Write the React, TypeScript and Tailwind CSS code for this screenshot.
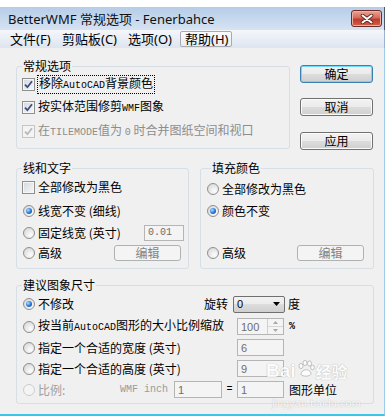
import React from "react";

type Opt = { checked?: boolean; disabled?: boolean };

function Check({ checked, disabled }: Opt) {
  return (
    <span
      className={
        disabled
          ? "flex h-[13px] w-[13px] shrink-0 items-center justify-center border border-[#c5c5c5] bg-[#f4f4f4]"
          : "flex h-[13px] w-[13px] shrink-0 items-center justify-center border border-[#8e8f8f] bg-[linear-gradient(135deg,#d3d7dd,#f8f8f8)] shadow-[inset_0_0_0_1px_#f6f6f6]"
      }
    >
      {checked && (
        <svg width="9" height="9" viewBox="0 0 9 9">
          <path
            d="M1 4.6 L3.4 7.2 L8 1.2"
            fill="none"
            stroke={disabled ? "#b8b8b8" : "#3d4f82"}
            strokeWidth="1.8"
          />
        </svg>
      )}
    </span>
  );
}

function Radio({ checked, disabled }: Opt) {
  return (
    <span
      className={
        disabled
          ? "flex h-[12px] w-[12px] shrink-0 items-center justify-center rounded-full border border-[#cdcdcd] bg-[#f4f4f4]"
          : "flex h-[12px] w-[12px] shrink-0 items-center justify-center rounded-full border border-[#8e8f8f] bg-[radial-gradient(circle_at_65%_70%,#fdfdfd,#d2d2d2)]"
      }
    >
      {checked && (
        <span className="h-[6px] w-[6px] rounded-full bg-[radial-gradient(circle_at_35%_35%,#a4e4ff,#2b70d4_55%,#0f3d92)]" />
      )}
    </span>
  );
}

function Btn({ children, primary }: { children: React.ReactNode; primary?: boolean }) {
  return (
    <div
      className={
        primary
          ? "flex h-[18px] w-[73px] items-center justify-center rounded-[3px] border border-[#3c7fb1] bg-[linear-gradient(#f2f2f2_0%,#ebebeb_49%,#dddddd_50%,#cfcfcf_100%)] shadow-[inset_0_0_0_1px_#6fd8fb] text-[12px] leading-[14px]"
          : "flex h-[18px] w-[73px] items-center justify-center rounded-[3px] border border-[#707070] bg-[linear-gradient(#f2f2f2_0%,#ebebeb_49%,#dddddd_50%,#cfcfcf_100%)] shadow-[inset_0_0_0_1px_#fbfbfb] text-[12px] leading-[14px]"
      }
    >
      {children}
    </div>
  );
}

function EditBtn({ className }: { className: string }) {
  return (
    <div
      className={
        "flex h-[16px] w-[67px] items-center justify-center rounded-[3px] border border-[#adb2b5] bg-[#f4f4f4] text-[12px] leading-[14px] text-[#838383] " +
        className
      }
    >
      编辑
    </div>
  );
}

function Field({ value, className }: { value: string; className: string }) {
  return (
    <div
      className={
        "flex h-[17px] items-center border border-[#b5b5b5] bg-[#f4f4f4] pl-[3px] font-['Liberation_Sans',sans-serif] text-[11px] text-[#6d6d6d] " +
        className
      }
    >
      {value}
    </div>
  );
}

function Mono({ children }: { children: React.ReactNode }) {
  return <span className="font-['Liberation_Mono',monospace] text-[10px]">{children}</span>;
}

function Group({
  title,
  className,
  legend,
  children,
}: {
  title: string;
  className: string;
  legend: string;
  children: React.ReactNode;
}) {
  return (
    <fieldset className={"rounded-[3px] border border-[#d5dfe5] " + className}>
      <legend className={"px-[1px] text-[12px] leading-[14px] " + legend}>{title}</legend>
      {children}
    </fieldset>
  );
}

export default function App() {
  return (
    <div className="relative h-[420px] w-[390px] overflow-hidden bg-white font-['Noto_Sans_CJK_SC',sans-serif] text-black">
      <div className="mt-[7px] w-[385px]">
        {/* Title bar */}
        <div className="flex h-[23px] items-center justify-between border-r border-[#4f5866] bg-[linear-gradient(#b5cde8,#d6e3f2)] pl-[8px] pr-[2px]">
          <span className="font-['Noto_Sans','Noto_Sans_CJK_SC',sans-serif] text-[13px] leading-[16px] text-[#111]">
            BetterWMF 常规选项 - Fenerbahce
          </span>
          <div className="flex h-[17px] w-[31px] items-center justify-center rounded-[3px] border border-[#6d2b28] bg-[linear-gradient(#e8a493_0%,#d56c5a_45%,#c0392b_55%,#d0634c_100%)] shadow-[inset_0_0_0_1px_#eeb0a3]">
            <svg width="14" height="10" viewBox="0 0 14 10">
              <path d="M2.5 1.5 L11.5 8.5 M11.5 1.5 L2.5 8.5" stroke="#5a2620" strokeWidth="3.6" strokeLinecap="round" />
              <path d="M2.5 1.5 L11.5 8.5 M11.5 1.5 L2.5 8.5" stroke="#ffffff" strokeWidth="2" strokeLinecap="round" />
            </svg>
          </div>
        </div>

        {/* Menu bar */}
        <div className="flex h-[18px] items-center border-r border-[#9ab4d0] bg-[linear-gradient(#f4f6fa,#dee5f0)] pl-[10px] font-['Noto_Sans','Noto_Sans_CJK_SC',sans-serif] text-[13px] leading-[16px]">
          <span className="w-[52px]">文件(F)</span>
          <span className="w-[66px]">剪贴板(C)</span>
          <span className="w-[52px]">选项(O)</span>
          <span className="flex h-[16px] w-[52px] items-center rounded-[2px] border border-[#a7abb0] bg-[linear-gradient(#fbfbfc,#e9ecf1)] pl-[4px]">
            帮助(H)
          </span>
        </div>

        {/* Body */}
        <div className="h-[368px] border-r border-b-2 border-r-[#9fcbea] border-b-[#3cc7ea] bg-[#f0f0f0] pl-[16px] pt-[11px]">
          {/* Row 1 */}
          <div className="flex gap-[10px]">
            <Group title="常规选项" legend="ml-[5px]" className="h-[90px] w-[274px]">
              <div className="flex h-[22px] items-center gap-[2px] pl-[5px] text-[12px] leading-[12px]">
                <Check checked />
                <span className="border border-dotted border-black px-[1px] py-[1px]">
                  移除<Mono>AutoCAD</Mono>背景颜色
                </span>
              </div>
              <div className="flex h-[24px] items-center gap-[3px] pl-[5px] text-[12px] leading-[14px]">
                <Check checked />
                <span>
                  按实体范围修剪<Mono>WMF</Mono>图象
                </span>
              </div>
              <div className="flex h-[24px] items-center gap-[3px] pl-[5px] text-[12px] leading-[14px] text-[#8d8d8d]">
                <Check checked disabled />
                <span>
                  在<Mono>TILEMODE</Mono>值为 <Mono>0</Mono> 时合并图纸空间和视口
                </span>
              </div>
            </Group>
            <div className="flex w-[73px] flex-col">
              <div className="mt-[6px]">
                <Btn primary>确定</Btn>
              </div>
              <div className="mt-[15px]">
                <Btn>取消</Btn>
              </div>
              <div className="mt-[16px]">
                <Btn>应用</Btn>
              </div>
            </div>
          </div>

          {/* Row 2 */}
          <div className="mt-[11px] flex gap-[11px]">
            <Group title="线和文字" legend="ml-[5px]" className="h-[108px] w-[173px]">
              <div className="flex h-[24px] items-center gap-[3px] pl-[5px] text-[12px] leading-[14px]">
                <Check />
                <span>全部修改为黑色</span>
              </div>
              <div className="flex h-[24px] items-center gap-[3px] pl-[6px] text-[12px] leading-[14px]">
                <Radio checked />
                <span>线宽不变 (细线)</span>
              </div>
              <div className="flex h-[20px] items-center gap-[3px] pl-[6px] text-[12px] leading-[14px]">
                <Radio />
                <span>固定线宽 (英寸)</span>
                <div className="ml-auto mr-[4px] flex h-[16px] w-[40px] items-center border border-[#b5b5b5] bg-[#f4f4f4] pl-[3px] font-['Liberation_Mono',monospace] text-[10px] text-[#6d6d6d]">
                  0.01
                </div>
              </div>
              <div className="flex h-[20px] items-center gap-[3px] pl-[6px] text-[12px] leading-[14px]">
                <Radio />
                <span>高级</span>
                <EditBtn className="ml-auto mr-[7px]" />
              </div>
            </Group>
            <Group title="填充颜色" legend="ml-[10px]" className="h-[108px] w-[174px]">
              <div className="flex h-[28px] items-center gap-[3px] pl-[6px] text-[12px] leading-[14px]">
                <Radio />
                <span>全部修改为黑色</span>
              </div>
              <div className="flex h-[16px] items-center gap-[3px] pl-[6px] text-[12px] leading-[14px]">
                <Radio checked />
                <span>颜色不变</span>
              </div>
              <div className="h-[24px]" />
              <div className="flex h-[20px] items-center gap-[3px] pl-[6px] text-[12px] leading-[14px]">
                <Radio />
                <span>高级</span>
                <EditBtn className="ml-auto mr-[9px]" />
              </div>
            </Group>
          </div>

          {/* Row 3 */}
          <div className="mt-[9px]">
            <Group title="建议图象尺寸" legend="ml-[5px]" className="h-[126px] w-[358px]">
              <div className="flex h-[24px] items-center pl-[6px] text-[12px] leading-[14px]">
                <Radio checked />
                <span className="ml-[3px] flex-1">不修改</span>
                <span className="mr-[5px]">旋转</span>
                <div className="flex h-[17px] w-[52px] items-center justify-between rounded-[2px] border border-[#707070] bg-[linear-gradient(#f2f2f2_0%,#ebebeb_49%,#dddddd_50%,#cfcfcf_100%)] pl-[3px] pr-[4px] font-['Liberation_Sans',sans-serif] text-[11px]">
                  <span>0</span>
                  <svg width="7" height="4" viewBox="0 0 7 4">
                    <path d="M0 0 H7 L3.5 4 Z" fill="#000" />
                  </svg>
                </div>
                <span className="ml-[3px] w-[85px]">度</span>
              </div>
              <div className="flex h-[21px] items-center pl-[6px] text-[12px] leading-[14px]">
                <Radio />
                <span className="ml-[3px] flex-1">
                  按当前<Mono>AutoCAD</Mono>图形的大小比例缩放
                </span>
                <div className="flex h-[17px] w-[47px] border border-[#b5b5b5] bg-[#f4f4f4] font-['Liberation_Sans',sans-serif] text-[11px] text-[#6d6d6d]">
                  <span className="flex flex-1 items-center pl-[3px]">100</span>
                  <div className="flex w-[16px] flex-col border-l border-[#cfcfcf]">
                    <div className="flex flex-1 items-center justify-center border-b border-[#d6d6d6]">
                      <svg width="5" height="3" viewBox="0 0 5 3">
                        <path d="M0 3 H5 L2.5 0 Z" fill="#a8a8a8" />
                      </svg>
                    </div>
                    <div className="flex flex-1 items-center justify-center">
                      <svg width="5" height="3" viewBox="0 0 5 3">
                        <path d="M0 0 H5 L2.5 3 Z" fill="#a8a8a8" />
                      </svg>
                    </div>
                  </div>
                </div>
                <span className="ml-[5px] w-[84px] font-['Liberation_Mono',monospace] text-[10px] font-bold">%</span>
              </div>
              <div className="flex h-[21px] items-center pl-[6px] text-[12px] leading-[14px]">
                <Radio />
                <span className="ml-[3px] flex-1">指定一个合适的宽度 (英寸)</span>
                <Field value="6" className="w-[47px]" />
                <span className="ml-[5px] w-[84px]" />
              </div>
              <div className="flex h-[21px] items-center pl-[6px] text-[12px] leading-[14px]">
                <Radio />
                <span className="ml-[3px] flex-1">指定一个合适的高度 (英寸)</span>
                <Field value="9" className="w-[47px]" />
                <span className="ml-[5px] w-[84px]" />
              </div>
              <div className="flex h-[21px] items-center pl-[6px] text-[12px] leading-[14px]">
                <Radio disabled />
                <span className="ml-[3px] flex-1 text-[#a0a0a0]">比例:</span>
                <span className="mr-[6px] font-['Liberation_Mono',monospace] text-[10px] text-[#9a9a9a]">WMF inch</span>
                <Field value="1" className="w-[48px]" />
                <span className="w-[15px] text-center font-['Liberation_Mono',monospace] text-[10px]">=</span>
                <Field value="1" className="w-[47px]" />
                <span className="ml-[5px] w-[84px]">图形单位</span>
              </div>
            </Group>
          </div>
        </div>
      </div>

      {/* Baidu watermark overlay */}
      <div className="pointer-events-none absolute left-[266px] top-[360px] opacity-80">
        <div className="flex h-[20px] items-end">
          <span className="font-['Liberation_Sans',sans-serif] text-[19px] font-bold leading-[19px] text-white [text-shadow:0_0_1px_#8c8c8c]">
            Bai
          </span>
          <svg width="20" height="18" viewBox="0 0 20 18" className="mb-[2px]">
            <g fill="#fff" stroke="#9a9a9a" strokeWidth="0.7">
              <ellipse cx="5" cy="6" rx="2" ry="2.6" />
              <ellipse cx="9" cy="3" rx="2" ry="2.6" />
              <ellipse cx="13.5" cy="3.5" rx="2" ry="2.6" />
              <ellipse cx="16.5" cy="7.5" rx="1.8" ry="2.3" />
              <path d="M5 14 C6 9 13 8 15 13 C16 17 5 17 5 14 Z" />
            </g>
          </svg>
          <span className="text-[16px] font-bold leading-[18px] text-white [text-shadow:0_0_1px_#8c8c8c]">经验</span>
        </div>
        <div className="mt-[17px] pl-[6px] font-['Liberation_Sans',sans-serif] text-[11px] leading-[12px] text-white [text-shadow:0_0_1px_#9c9c9c]">
          jingyan.baidu.com
        </div>
      </div>
    </div>
  );
}
